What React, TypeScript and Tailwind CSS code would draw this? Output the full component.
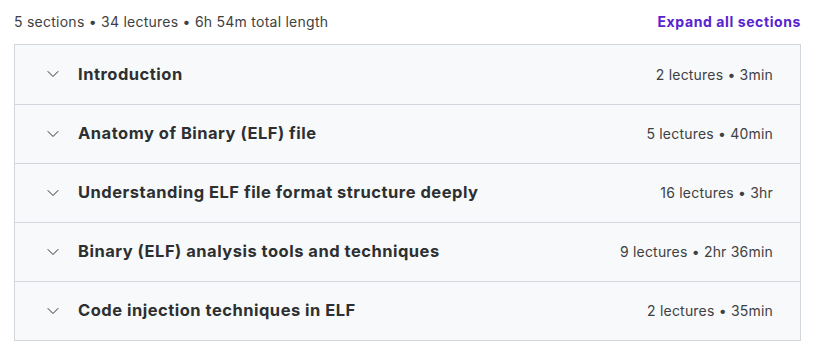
import { ChevronDown } from "lucide-react";

interface ISection {
    title: string;
    meta: string;
}

const sections: ISection[] = [
    { title: "Introduction", meta: "2 lectures • 3min" },
    { title: "Anatomy of Binary (ELF) file", meta: "5 lectures • 40min" },
    { title: "Understanding ELF file format structure deeply", meta: "16 lectures • 3hr" },
    { title: "Binary (ELF) analysis tools and techniques", meta: "9 lectures • 2hr 36min" },
    { title: "Code injection techniques in ELF", meta: "2 lectures • 35min" },
];

export default function App() {
    return (
        <div className="min-h-screen bg-white px-[14px] pr-[17px] text-[#2d2f31]" style={{ fontFamily: "Inter, 'Noto Sans', sans-serif" }}>
            <div className="flex h-[44px] items-center justify-between pb-[2px]">
                <span className="text-[14px] tracking-[0.25px] text-[#3e4143]">5 sections • 34 lectures • 6h 54m total length</span>
                <button className="text-[14px] font-bold tracking-[0.6px] text-[#5624d0]">Expand all sections</button>
            </div>

            <div className="border border-[#d1d7dc]">
                {sections.map((s, i) => (
                    <div
                        key={s.title}
                        className={`flex h-[59px] items-center justify-between bg-[#f7f9fa] pb-[1px] pl-[28px] pr-[27px] ${i > 0 ? "border-t border-[#d1d7dc]" : ""}`}
                    >
                        <div className="flex items-center gap-[15px]">
                            <ChevronDown size={20} strokeWidth={1.2} className="text-[#2d2f31]" />
                            <span className="text-[16.5px] font-bold tracking-[0.5px]">{s.title}</span>
                        </div>
                        <span className="text-[14px] tracking-[0.2px] text-[#3e4143]">{s.meta}</span>
                    </div>
                ))}
            </div>
        </div>
    );
}
